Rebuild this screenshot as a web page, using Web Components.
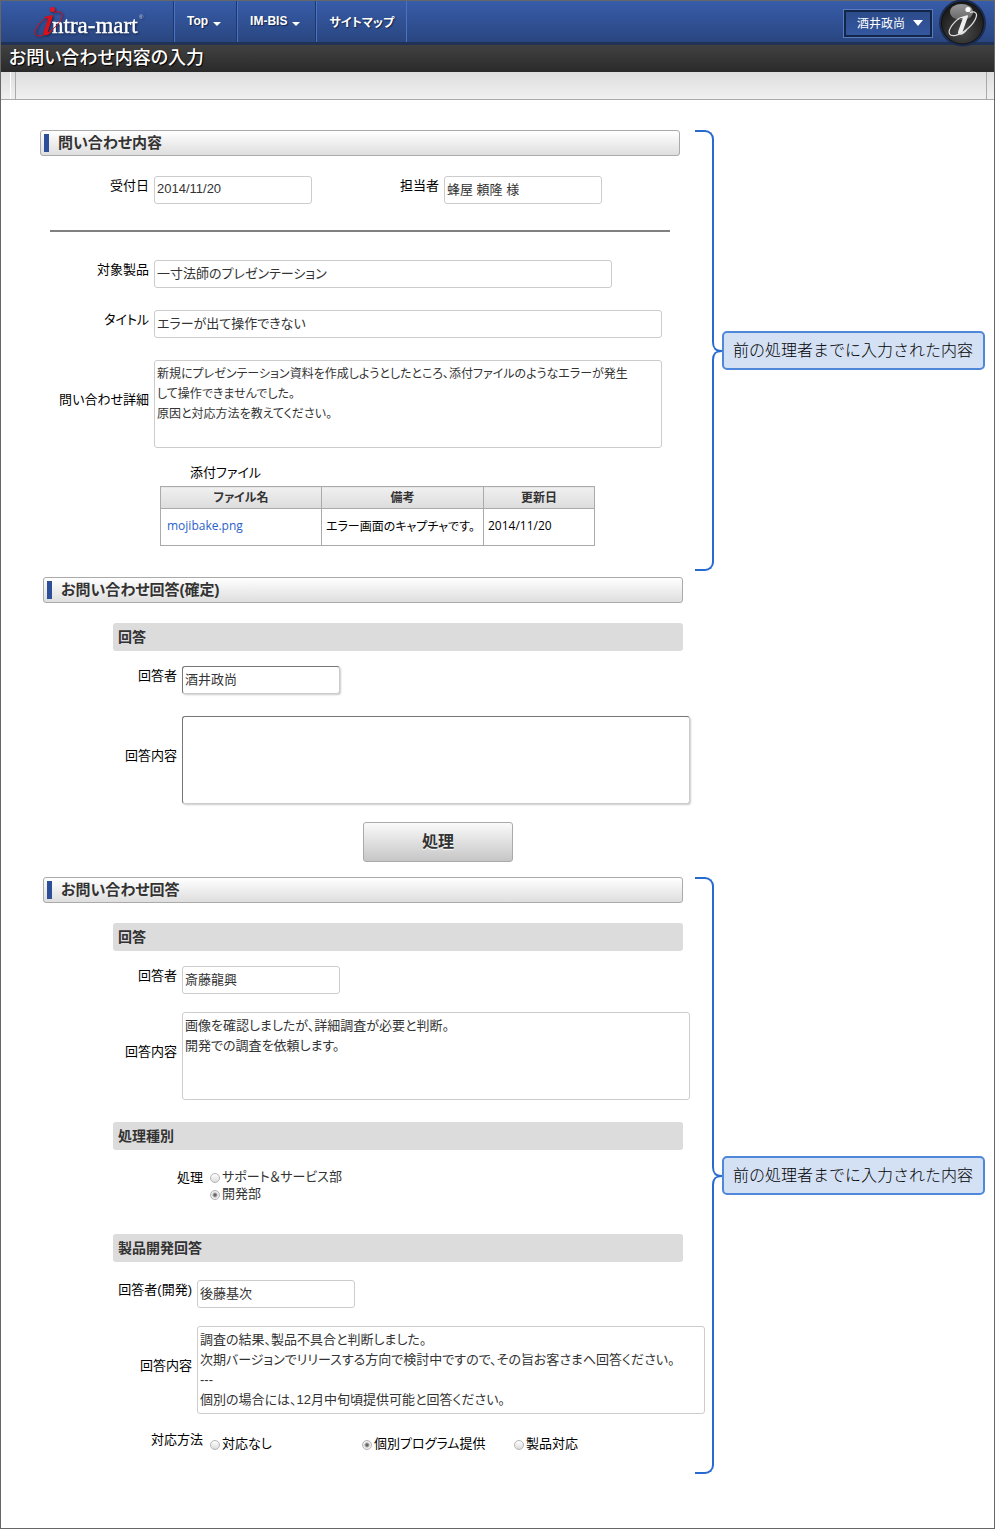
<!DOCTYPE html>
<html lang="ja">
<head>
  <meta charset="UTF-8">
  <meta name="viewport" content="width=device-width, initial-scale=1.0">
  <title>お問い合わせ内容の入力</title>
  <style>
    body {
      margin: 0;
      color: #000;
      font-family: "Liberation Sans", "Noto Sans CJK JP", sans-serif;
      font-size: 13px;
      font-feature-settings: "palt";
    }

    .row {
      display: flex;
    }

    hr {
      width: auto;
      height: 2px;
      margin: 26px 25px 28px 10px;
      border: 0;
      background: #808080;
    }

    .indent { --inset-left: 3px; --inset-right: 12px; }
    .space-sm { margin-top: 12px; }
    .space { margin-top: 18px; }
    .space-lg { margin-top: 22px; }
    .space-xl { margin-top: 32px; }
    .label-sm { --label-width: 109px; }
    .label-next { --label-width: 127px; }
    .label-md { --label-width: 137px; }
    .label-lg { --label-width: 152px; }
  </style>
</head>
<body>
  <app-shell>
    <site-header slot="header" user="酒井政尚">
      <nav-item menu>Top</nav-item>
      <nav-item menu>IM-BIS</nav-item>
      <nav-item>サイトマップ</nav-item>
    </site-header>
    <page-title slot="header">お問い合わせ内容の入力</page-title>

    <form-section heading="問い合わせ内容" note="前の処理者までに入力された内容" style="--end: 25px">
      <div class="row">
        <form-field class="label-sm" label="受付日" value="2014/11/20" readonly></form-field>
        <form-field class="label-next" label="担当者" value="蜂屋 頼隆 様" readonly></form-field>
      </div>
      <hr>
      <form-field class="label-sm" label="対象製品" value="一寸法師のプレゼンテーション" size="medium" readonly></form-field>
      <form-field class="label-sm space-lg" label="タイトル" value="エラーが出て操作できない" size="large" readonly></form-field>
      <form-field class="label-sm space-lg" label="問い合わせ詳細" multiline dense readonly value="新規にプレゼンテーション資料を作成しようとしたところ、添付ファイルのようなエラーが発生
して操作できませんでした。
原因と対応方法を教えてください。"></form-field>
      <file-table class="space-sm"></file-table>
    </form-section>

    <form-section class="indent" heading="お問い合わせ回答(確定)" style="--before: 6px">
      <sub-heading>回答</sub-heading>
      <form-field class="label-md" label="回答者" value="酒井政尚"></form-field>
      <form-field class="label-md space-lg" label="回答内容" multiline></form-field>
      <process-button class="space">処理</process-button>
    </form-section>

    <form-section class="indent" heading="お問い合わせ回答" note="前の処理者までに入力された内容" style="--before: 15px; --end: 22px">
      <sub-heading>回答</sub-heading>
      <form-field class="label-md" label="回答者" value="斎藤龍興" readonly></form-field>
      <form-field class="label-md space" label="回答内容" multiline readonly value="画像を確認しましたが、詳細調査が必要と判断。
開発での調査を依頼します。"></form-field>
      <sub-heading class="space-lg">処理種別</sub-heading>
      <radio-field label="処理" options="サポート＆サービス部|開発部" selected="1"></radio-field>
      <sub-heading class="space-xl">製品開発回答</sub-heading>
      <form-field class="label-lg space" label="回答者(開発)" value="後藤基次" readonly></form-field>
      <form-field class="label-lg space" label="回答内容" multiline readonly value="調査の結果、製品不具合と判断しました。
次期バージョンでリリースする方向で検討中ですので、その旨お客さまへ回答ください。
---
個別の場合には、12月中旬頃提供可能と回答ください。"></form-field>
      <radio-field class="space" label="対応方法" options="対応なし|個別プログラム提供|製品対応" selected="1" inline></radio-field>
    </form-section>
  </app-shell>

  <script>
    class AppShell extends HTMLElement {
      constructor() {
        super();
        this.attachShadow({ mode: "open" });
      }

      connectedCallback() {
        this.shadowRoot.innerHTML = /* html */ `
          <style>
            :host {
              display: block;
              box-sizing: border-box;
              min-height: 100vh;
              border: 1px solid #666;
              background: #fff;
            }

            main {
              padding: 30px 9px 24px 39px;
            }
          </style>

          <header><slot name="header"></slot></header>
          <main><slot></slot></main>
        `;
      }
    }

    class SiteHeader extends HTMLElement {
      constructor() {
        super();
        this.attachShadow({ mode: "open" });
      }

      connectedCallback() {
        this.shadowRoot.innerHTML = /* html */ `
          <style>
            :host {
              display: flex;
              height: 41px;
              border-bottom: 3px solid #203256;
              background: linear-gradient(#375ca9, #2a4680);
              font-size: 12px;
            }

            .logo {
              flex: none;
              width: 172px;
              height: 41px;
              border-right: 1px solid #1f3768;
            }

            nav {
              display: flex;
              flex: 1;
            }

            .user {
              display: flex;
              align-items: center;
              justify-content: space-between;
              width: 88px;
              height: 27px;
              margin: 9px 7px 0 0;
              padding: 0 7px 2px 11px;
              border: 2px solid #14254a;
              outline: 1px solid #587bc0;
              background: linear-gradient(#2c4b8a, #34579f);
              color: #fff;
              font: inherit;
            }

            .badge {
              position: relative;
              flex: none;
              width: 48px;
              height: 48px;
              margin: -2px 7px 0 0;
            }
          </style>

          <svg class="logo" viewBox="0 0 172 41" role="img" aria-label="intra-mart">
            <g style="filter: drop-shadow(1px 1px 1px #14254a)">
              <text x="51" y="32" font-family="Liberation Serif" font-size="23" fill="#fff" stroke="#fff" stroke-width=".4">ntra-mart</text>
              <text x="138" y="18" font-family="Liberation Sans" font-size="6" fill="#cdd6e8">®</text>
              <path d="M43.500 16l7.500-2c1 0 1 .8.800 1.600L47 30c-.4 1.500.3 1.600 1.300.8l2.200-2 .6.900c-2 2.500-4 4.600-6.300 4.600-2.300 0-2.800-1.600-2.100-3.800l4-11.900c.2-1-.3-1.300-1.200-1.300l-2.200-.2z" fill="#d8101c"/>
              <circle cx="51.500" cy="8.500" r="2.600" fill="#e01522"/>
              <path d="M53.500 11.500c5-1.500 8.500-.5 7.500 4-1.500 7.500-13 17.500-20.500 19.200-7 1.400-8-3-4.500-8.700 2-3.300 4.500-6 8-8.500" fill="none" stroke="#d8101c"/>
            </g>
          </svg>
          <nav><slot></slot></nav>
          <button class="user" type="button" aria-haspopup="true">
            <span>${this.getAttribute("user")}</span>
            <svg width="10" height="6" viewBox="0 0 10 6"><path d="M0 0h10L5 6z" fill="#fff"/></svg>
          </button>
          <svg class="badge" viewBox="0 0 48 48" role="img" aria-label="IM">
            <defs>
              <radialGradient id="ball" cx=".5" cy=".7" r=".6">
                <stop offset="0" stop-color="#4a4a4a"/>
                <stop offset="1" stop-color="#1c1c1c"/>
              </radialGradient>
              <linearGradient id="gloss" x2="0" y2="1">
                <stop offset="0" stop-color="#999"/>
                <stop offset="1" stop-color="#666"/>
              </linearGradient>
            </defs>
            <circle cx="23.500" cy="24" r="23.500" fill="#1c2c50"/>
            <circle cx="23.500" cy="24" r="21" fill="url(#ball)" stroke="#111"/>
            <ellipse cx="22.500" cy="13" rx="11.500" ry="8" fill="url(#gloss)"/>
            <circle cx="29" cy="10.500" r="2.600" fill="#fff"/>
            <path d="M20.500 18.500l7.500-2.300c1 0 1.200.6.900 1.500L23.800 32c-.3 1.200.3 1.400 1.200.7l2.300-2 .6.800c-2.200 2.500-4.200 4.200-6.400 4.200-2.400 0-2.900-1.600-2.200-3.700l4.200-11.700c.3-1-.1-1.200-.9-1.200h-2.100z" fill="#eee"/>
            <path d="M31 13.500c5-1.500 7.500.3 6.200 4.500-2.200 7.500-12.500 16.500-20.500 18.300-6.500 1.300-8-2.300-5.200-7.500 2-3.800 5-6.800 9-9.800" fill="none" stroke="#ddd" stroke-width="1.200"/>
          </svg>
        `;
      }
    }

    class NavItem extends HTMLElement {
      constructor() {
        super();
        this.attachShadow({ mode: "open" });
      }

      connectedCallback() {
        const caret = this.hasAttribute("menu")
          ? `<svg width="8" height="4" viewBox="0 0 8 4"><path d="M0 0h8L4 4z" fill="#fff"/></svg>`
          : "";

        this.shadowRoot.innerHTML = /* html */ `
          <style>
            :host {
              display: block;
              border-left: 1px solid #4a73c4;
              border-right: 1px solid #1f3768;
            }

            :host(:last-of-type) {
              border-right-color: #4a73c4;
            }

            a {
              display: flex;
              align-items: center;
              gap: 5px;
              height: 40px;
              padding: 0 12px;
              color: #fff;
              font-weight: bold;
              text-decoration: none;
              text-shadow: 1px 1px 1px #14254a;
            }

            svg {
              margin: 6px 3px 0 0;
            }
          </style>

          <a href="#"><slot></slot>${caret}</a>
        `;
      }
    }

    class PageTitle extends HTMLElement {
      constructor() {
        super();
        this.attachShadow({ mode: "open" });
      }

      connectedCallback() {
        this.shadowRoot.innerHTML = /* html */ `
          <style>
            :host {
              display: block;
            }

            h1 {
              margin: 0;
              padding: 0 8px;
              background: linear-gradient(#414141, #2a2a2a);
              color: #fff;
              font-size: 18px;
              font-weight: 500;
              line-height: 27px;
              text-shadow: 1px 1px 1px #000;
            }

            .toolbar {
              display: flex;
              height: 27px;
              padding: 0 7px 0 9px;
              border-bottom: 1px solid #aaa;
              background: linear-gradient(#dedede, #f0f0f0);
            }

            .toolbar::before {
              content: "";
              width: 1px;
              background: #fff;
            }

            .tools {
              flex: 1;
              margin-left: 4px;
              border-left: 1px solid #aaa;
              border-right: 1px solid #aaa;
            }
          </style>

          <h1><slot></slot></h1>
          <div class="toolbar"><div class="tools"></div></div>
        `;
      }
    }

    class FormSection extends HTMLElement {
      constructor() {
        super();
        this.attachShadow({ mode: "open" });
      }

      connectedCallback() {
        const note = this.getAttribute("note");

        this.shadowRoot.innerHTML = /* html */ `
          <style>
            :host {
              display: grid;
              grid-template-columns: minmax(0, 1fr) 290px;
              margin-top: var(--before, 0);
            }

            section {
              padding-bottom: var(--end, 0);
            }

            h2 {
              display: flex;
              align-items: center;
              gap: 9px;
              box-sizing: border-box;
              height: 26px;
              margin: 0 var(--inset-right, 15px) 20px var(--inset-left, 0);
              padding: 0 3px;
              border: 1px solid #aaa;
              border-radius: 3px;
              background: linear-gradient(#fff, #dedede);
              color: #333;
              font-size: 15px;
              line-height: 24px;
            }

            h2::before {
              content: "";
              width: 5px;
              height: 18px;
              background: #2d4f97;
            }
          </style>

          <section>
            <h2>${this.getAttribute("heading")}</h2>
            <slot></slot>
          </section>
          ${note ? `<side-note>${note}</side-note>` : ""}
        `;
      }
    }

    class SideNote extends HTMLElement {
      constructor() {
        super();
        this.attachShadow({ mode: "open" });
      }

      connectedCallback() {
        this.shadowRoot.innerHTML = /* html */ `
          <style>
            :host {
              display: flex;
              align-items: center;
            }

            .brace {
              display: flex;
              flex-direction: column;
              align-self: stretch;
              width: 27px;
            }

            .brace div {
              flex: 1;
              width: 17px;
              border-right: 2px solid #276bd0;
            }

            .brace div:first-child {
              border-top: 2px solid #276bd0;
              border-top-right-radius: 9px;
            }

            .brace div:last-child {
              border-bottom: 2px solid #276bd0;
              border-bottom-right-radius: 9px;
            }

            svg {
              display: block;
              margin-left: 17px;
            }

            p {
              flex: 1;
              margin: 0;
              padding: 0 9px;
              border: 2px solid #4f87d9;
              border-radius: 5px;
              background: #d4e0f3;
              font-size: 16px;
              font-weight: 300;
              font-feature-settings: normal;
              line-height: 35px;
              white-space: nowrap;
            }
          </style>

          <div class="brace">
            <div></div>
            <svg width="10" height="18" viewBox="0 0 10 18"><path d="M1 0c0 6 2 9 9 9-7 0-9 3-9 9" fill="none" stroke="#276bd0" stroke-width="2"/></svg>
            <div></div>
          </div>
          <p><slot></slot></p>
        `;
      }
    }

    class SubHeading extends HTMLElement {
      constructor() {
        super();
        this.attachShadow({ mode: "open" });
      }

      connectedCallback() {
        this.shadowRoot.innerHTML = /* html */ `
          <style>
            :host {
              display: block;
            }

            h3 {
              margin: 0 12px 15px 73px;
              padding: 0 5px;
              border-radius: 3px;
              background: #dcdcdc;
              color: #333;
              font-size: 14px;
              line-height: 28px;
            }
          </style>

          <h3><slot></slot></h3>
        `;
      }
    }

    class FormField extends HTMLElement {
      constructor() {
        super();
        this.attachShadow({ mode: "open" });
      }

      connectedCallback() {
        const readonly = this.hasAttribute("readonly") ? "readonly" : "";
        const multiline = this.hasAttribute("multiline");

        this.shadowRoot.innerHTML = /* html */ `
          <style>
            :host {
              display: flex;
              align-items: center;
              gap: 5px;
            }

            label {
              flex: none;
              width: var(--label-width);
              padding-bottom: 9px;
              line-height: 18px;
              text-align: right;
              white-space: nowrap;
            }

            input,
            textarea {
              display: block;
              flex: none;
              box-sizing: border-box;
              width: 158px;
              height: 28px;
              margin: 0;
              padding: 0 2px 4px;
              border: 1px solid;
              border-color: #777 #ccc #ccc #777;
              border-radius: 3px;
              outline: 0;
              background: #fff;
              box-shadow: 1px 1px 2px #ccc;
              color: #333;
              font: inherit;
              font-feature-settings: inherit;
            }

            textarea {
              width: 508px;
              height: 88px;
              padding: 3px 2px;
              line-height: 20px;
              overflow: hidden;
              resize: none;
            }

            input:read-only,
            textarea:read-only {
              border-color: #ccc;
              box-shadow: none;
            }

            :host([size="medium"]) input { width: 458px; }
            :host([size="large"]) input { width: 508px; }
            :host([dense]) textarea { font-size: 12px; }
          </style>

          <label for="control">${this.getAttribute("label")}</label>
          ${multiline
            ? `<textarea id="control" ${readonly}></textarea>`
            : `<input id="control" type="text" ${readonly}>`}
        `;

        this.shadowRoot.querySelector("#control").value = this.getAttribute("value") || "";
      }
    }

    class RadioField extends HTMLElement {
      constructor() {
        super();
        this.attachShadow({ mode: "open" });
      }

      connectedCallback() {
        const selected = Number(this.getAttribute("selected"));
        const options = this.getAttribute("options").split("|").map((text, index) => `
          <label><input type="radio" name="choice" ${index === selected ? "checked" : ""}>${text}</label>
        `);

        this.shadowRoot.innerHTML = /* html */ `
          <style>
            :host {
              display: flex;
              gap: 7px;
              padding-top: 3px;
            }

            .name {
              width: 163px;
              line-height: 20px;
              text-align: right;
            }

            .options {
              display: flex;
              flex-direction: column;
            }

            label {
              display: flex;
              align-items: center;
              gap: 2px;
              color: #333;
              line-height: 17px;
            }

            input {
              appearance: none;
              box-sizing: border-box;
              width: 10px;
              height: 10px;
              margin: 3px 0 0;
              border: 1px solid #b4b4b4;
              border-radius: 50%;
              background: linear-gradient(#fff, #ddd);
            }

            input:checked {
              background: radial-gradient(circle, #666 0 1px, #eee 3px);
            }

            :host([inline]) {
              padding-top: 0;
            }

            :host([inline]) .name {
              line-height: 16px;
            }

            :host([inline]) .options {
              flex-direction: row;
              padding-top: 3px;
            }

            :host([inline]) label {
              width: 152px;
              color: #000;
            }
          </style>

          <div class="name" id="name">${this.getAttribute("label")}</div>
          <div class="options" role="radiogroup" aria-labelledby="name">${options.join("")}</div>
        `;
      }
    }

    class FileTable extends HTMLElement {
      constructor() {
        super();
        this.attachShadow({ mode: "open" });
      }

      connectedCallback() {
        this.shadowRoot.innerHTML = /* html */ `
          <style>
            :host {
              display: block;
            }

            table {
              width: 435px;
              margin-left: 120px;
              border-collapse: collapse;
              table-layout: fixed;
              color: #333;
            }

            caption {
              padding-left: 30px;
              color: #000;
              line-height: 26px;
              text-align: left;
            }

            th,
            td {
              box-sizing: border-box;
              padding: 0 4px;
              border: 1px solid #aaa;
              white-space: nowrap;
            }

            th {
              height: 22px;
              background: linear-gradient(#f0f0f0, #dcdcdc);
              font-size: 12px;
              line-height: 20px;
            }

            td {
              height: 37px;
              padding: 0 4px 3px;
              color: #000;
              font-family: "Open Sans", "Noto Sans CJK JP", sans-serif;
              font-size: 12px;
            }

            td:first-child {
              padding-left: 6px;
            }

            .file { width: 161px; }
            .note { width: 162px; }

            a {
              color: #2a62c8;
              text-decoration: none;
            }
          </style>

          <table>
            <caption>添付ファイル</caption>
            <thead>
              <tr><th class="file">ファイル名</th><th class="note">備考</th><th>更新日</th></tr>
            </thead>
            <tbody>
              <tr>
                <td><a href="#">mojibake.png</a></td>
                <td>エラー画面のキャプチャです。</td>
                <td>2014/11/20</td>
              </tr>
            </tbody>
          </table>
        `;
      }
    }

    class ProcessButton extends HTMLElement {
      constructor() {
        super();
        this.attachShadow({ mode: "open" });
      }

      connectedCallback() {
        this.shadowRoot.innerHTML = /* html */ `
          <style>
            :host {
              display: flex;
              justify-content: center;
              padding-left: 141px;
            }

            button {
              width: 150px;
              height: 40px;
              padding: 0 0 4px;
              border: 1px solid #aaa;
              border-radius: 3px;
              background: linear-gradient(#fafafa, #c6c6c6);
              color: #333;
              font: inherit;
              font-size: 16px;
              font-weight: bold;
              text-shadow: 0 1px 1px #fff;
            }
          </style>

          <button type="button"><slot></slot></button>
        `;
      }
    }

    customElements.define("app-shell", AppShell);
    customElements.define("site-header", SiteHeader);
    customElements.define("nav-item", NavItem);
    customElements.define("page-title", PageTitle);
    customElements.define("form-section", FormSection);
    customElements.define("side-note", SideNote);
    customElements.define("sub-heading", SubHeading);
    customElements.define("form-field", FormField);
    customElements.define("radio-field", RadioField);
    customElements.define("file-table", FileTable);
    customElements.define("process-button", ProcessButton);
  </script>
</body>
</html>
